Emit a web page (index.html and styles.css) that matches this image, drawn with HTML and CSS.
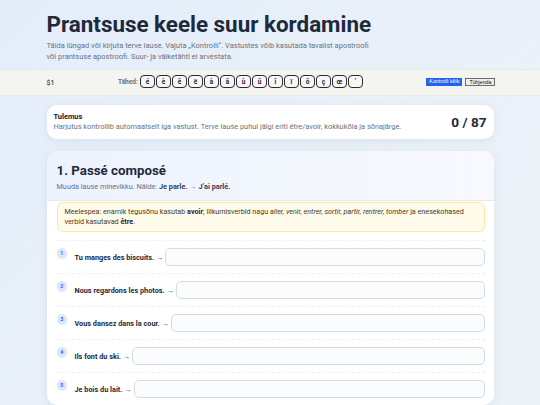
FILE: index.html
```html
<!DOCTYPE html>
<html lang="et">
<head>
<meta charset="utf-8">
<title>Prantsuse keele suur kordamine</title>
<link rel="stylesheet" href="styles.css">
</head>
<body>
<header class="top">
  <div class="wrap">
    <h1 class="title">Prantsuse keele suur kordamine</h1>
    <p class="intro">Täida lüngad või kirjuta terve lause. Vajuta „Kontrolli“. Vastustes võib kasutada tavalist apostroofi või prantsuse apostroofi. Suur- ja väiketähti ei arvestata.</p>
  </div>
</header>
<div class="toolbar">
  <div class="wrap bar">
    <span class="count">$1</span>
    <div class="letters">
      <span class="letters-label">Tähed:</span>
      <button class="key">é</button><button class="key">è</button><button class="key">ê</button><button class="key">ë</button><button class="key">à</button><button class="key">â</button><button class="key">ù</button><button class="key">û</button><button class="key">î</button><button class="key">ï</button><button class="key">ô</button><button class="key">ç</button><button class="key">œ</button><button class="key">’</button>
    </div>
    <div class="actions">
      <button class="btn-primary">Kontrolli kõik</button><button class="btn-plain">Tühjenda</button>
    </div>
  </div>
</div>
<main class="wrap">
  <section class="result">
    <div>
      <div class="result-title">Tulemus</div>
      <div class="result-text">Harjutus kontrollib automaatselt iga vastust. Terve lause puhul jälgi eriti être/avoir, kokkukõla ja sõnajärge.</div>
    </div>
    <div class="score">0 / 87</div>
  </section>
  <section class="card">
    <div class="card-head">
      <h2 class="card-title">1. Passé composé</h2>
      <p class="card-sub">Muuda lause minevikku. Näide: <b>Je parle.</b> → <b>J’ai parlé.</b></p>
    </div>
    <div class="hint">Meelespea: enamik tegusõnu kasutab <b>avoir</b>; liikumisverbid nagu <i>aller, venir, entrer, sortir, partir, rentrer, tomber</i> ja enesekohased verbid kasutavad <b>être</b>.</div>
    <ol class="items">
      <li class="item"><span class="num">1</span><label class="q">Tu manges des biscuits. →</label><input class="answer" type="text"></li>
      <li class="item"><span class="num">2</span><label class="q">Nous regardons les photos. →</label><input class="answer" type="text"></li>
      <li class="item"><span class="num">3</span><label class="q">Vous dansez dans la cour. →</label><input class="answer" type="text"></li>
      <li class="item"><span class="num">4</span><label class="q">Ils font du ski. →</label><input class="answer" type="text"></li>
      <li class="item"><span class="num">5</span><label class="q">Je bois du lait. →</label><input class="answer" type="text"></li>
    </ol>
  </section>
</main>
</body>
</html>
```

FILE: styles.css
```css
html, body {
  margin: 0;
  padding: 0;
}
body {
  font-family: Roboto, "Noto Sans", sans-serif;
  color: #1f2937;
  background: linear-gradient(135deg, #e3edfa 0%, #e9f0f8 50%, #edf2f7 100%);
  height: 405px;
  overflow: hidden;
}
.wrap {
  width: 447px;
  margin: 0 auto;
}
.top {
  padding: 10px 0 7px;
}
.title {
  margin: 0;
  font-size: 22.4px;
  line-height: 28px;
  font-weight: 700;
  color: #1e293b;
}
.intro {
  margin: 2px 0 0;
  max-width: 332px;
  font-size: 7.5px;
  line-height: 11px;
  color: #6b7280;
}
.toolbar {
  background: #f4f4f1;
  border-top: 1px solid #e7e8ea;
  border-bottom: 1px solid #e7e8ea;
}
.bar {
  height: 25px;
  display: flex;
  align-items: center;
  justify-content: space-between;
}
.count {
  font-size: 7px;
  color: #374151;
  font-weight: 500;
}
.letters {
  display: flex;
  align-items: center;
  gap: 1.5px;
  margin-top: -2px;
}
.letters-label {
  font-size: 6.5px;
  font-weight: 700;
  color: #6b7280;
  margin-right: 1px;
}
.key {
  width: 14.5px;
  height: 12.5px;
  padding: 0;
  border: 1px solid #2b2b2b;
  border-radius: 4px;
  background: #f7f7f7;
  font-family: Roboto, sans-serif;
  font-size: 6.5px;
  font-weight: 700;
  color: #1f2937;
  line-height: 10px;
}
.actions {
  display: flex;
  gap: 3px;
  align-items: center;
  margin-top: -1px;
  margin-right: -2px;
}
.btn-primary {
  height: 7.5px;
  padding: 0 3px;
  border: 0;
  background: #2463eb;
  color: #fff;
  font-family: "Liberation Sans", sans-serif;
  font-size: 5.3px;
  line-height: 7.5px;
}
.btn-plain {
  height: 8px;
  padding: 0 3px;
  border: 1px solid #6b6b6b;
  background: #efefef;
  color: #111;
  font-family: "Liberation Sans", sans-serif;
  font-size: 5.3px;
  line-height: 6px;
}
.result {
  margin-top: 9px;
  background: #fff;
  border-radius: 10px;
  box-shadow: 0 2px 8px rgba(30, 64, 120, 0.07);
  padding: 0 7px;
  display: flex;
  justify-content: space-between;
  align-items: center;
  height: 34px;
}
.result-title {
  font-size: 7.4px;
  font-weight: 700;
  color: #111827;
  line-height: 10px;
}
.result-text {
  font-size: 7.4px;
  color: #6b7280;
  line-height: 10px;
}
.score {
  font-size: 13.6px;
  font-weight: 700;
  color: #1f2937;
}
.card {
  margin-top: 12px;
  background: #fff;
  border-radius: 10px;
  box-shadow: 0 2px 10px rgba(30, 64, 120, 0.08);
  overflow: hidden;
}
.card-head {
  background: linear-gradient(90deg, #edf3fd 0%, #f7f9fe 100%);
  border-bottom: 1px solid #e5e9f0;
  padding: 11px 10px 8px;
}
.card-title {
  margin: 0;
  font-size: 13.3px;
  line-height: 18px;
  font-weight: 700;
  color: #1e293b;
}
.card-sub {
  margin: 2px 0 0;
  font-size: 7.3px;
  line-height: 10px;
  color: #6b7280;
}
.card-sub b {
  color: #374151;
}
.hint {
  margin: 1px 9px 0 10px;
  background: #fffbea;
  border: 1px solid #f8e7a8;
  border-radius: 6px;
  padding: 4px 7px;
  font-size: 7.2px;
  line-height: 10px;
  color: #4b3a1a;
}
.hint b {
  color: #1f2937;
}
.items {
  list-style: none;
  margin: 8px 9px 0 10px;
  padding: 0;
}
.item {
  display: flex;
  align-items: center;
  padding: 7px 0;
  border-top: 1px dashed #eceff3;
  height: 18px;
}
.num {
  flex: none;
  align-self: flex-start;
  width: 10.5px;
  height: 10.5px;
  border-radius: 50%;
  background: #dbe7fd;
  color: #2563eb;
  font-size: 5.2px;
  font-weight: 700;
  line-height: 10.5px;
  text-align: center;
}
.q {
  flex: none;
  margin-left: 7.5px;
  margin-right: 2px;
  font-size: 7.3px;
  font-weight: 700;
  color: #1f2937;
  padding-top: 1px;
}
.answer {
  flex: 1;
  min-width: 0;
  height: 18px;
  box-sizing: border-box;
  border: 1px solid #d5dbe3;
  border-radius: 5px;
  background: #fbfcfd;
  margin: 0;
  padding: 0 5px;
}
```
